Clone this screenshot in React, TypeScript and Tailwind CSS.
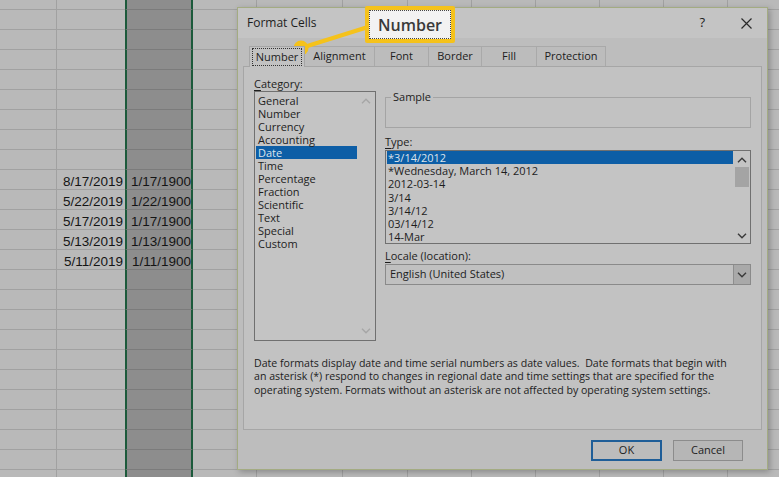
const COLS = [
  'w-[57px]',
  'w-[68px]',
  'w-[68px]',
  'w-[64px]',
  'w-[86px]',
  'w-[65px]',
  'w-[64px]',
  'w-[64px]',
  'w-[64px]',
  'w-[64px]',
  'w-[64px]',
  'w-[64px]',
];

const DATES: Record<number, [string, string]> = {
  9: ['8/17/2019', '1/17/1900'],
  10: ['5/22/2019', '1/22/1900'],
  11: ['5/17/2019', '1/17/1900'],
  12: ['5/13/2019', '1/13/1900'],
  13: ['5/11/2019', '1/11/1900'],
};

const CATEGORIES = [
  'General',
  'Number',
  'Currency',
  'Accounting',
  'Date',
  'Time',
  'Percentage',
  'Fraction',
  'Scientific',
  'Text',
  'Special',
  'Custom',
];

const TYPES = [
  '*3/14/2012',
  '*Wednesday, March 14, 2012',
  '2012-03-14',
  '3/14',
  '3/14/12',
  '03/14/12',
  '14-Mar',
];

const TABS = [
  { label: 'Number', w: 'w-[56px]' },
  { label: 'Alignment', w: 'w-[70px]' },
  { label: 'Font', w: 'w-[54px]' },
  { label: 'Border', w: 'w-[53px]' },
  { label: 'Fill', w: 'w-[55px]' },
  { label: 'Protection', w: 'w-[69px]' },
];

function Chevron({ up, className }: { up?: boolean; className?: string }) {
  return (
    <svg width="10" height="6" viewBox="0 0 10 6" className={className}>
      <path
        d={up ? 'M1 5.2 L5 1.2 L9 5.2' : 'M1 0.8 L5 4.8 L9 0.8'}
        fill="none"
        stroke="currentColor"
        strokeWidth="1.4"
      />
    </svg>
  );
}

function Sheet() {
  const rows = Array.from({ length: 25 }, (_, i) => i);
  return (
    <div className="flex flex-col">
      {rows.map((r) => (
        <div key={r} className={r === 0 ? 'flex h-[10px]' : 'flex h-[20px]'}>
          {COLS.map((w, c) => {
            const data = DATES[r];
            const text = data && (c === 1 ? data[0] : c === 2 ? data[1] : '');
            let cls = `${w} shrink-0 border-b border-[#a1a1a1] flex items-end justify-end pr-[2px] pb-[1px]`;
            if (c === 2) {
              cls = `${w} shrink-0 border-b border-b-[#7b7b7b] border-x-2 border-x-[#1c5a3b] bg-[#8d8d8d] flex items-end justify-end pr-0 pb-[1px]`;
            } else if (c !== 1) {
              cls += ' border-r';
            }
            return (
              <div key={c} className={cls}>
                {text ? (
                  <span className="font-['Liberation_Sans',sans-serif] text-[13.5px] text-[#151515] leading-none">
                    {text}
                  </span>
                ) : null}
              </div>
            );
          })}
        </div>
      ))}
    </div>
  );
}

function Dialog() {
  return (
    <div className="absolute left-[237px] top-[7px] w-[531px] h-[463px] border border-[#a3ab82] bg-[#bdbdbd] shadow-[2px_2px_6px_rgba(0,0,0,0.25)] flex flex-col font-['Open_Sans',sans-serif] text-[#1d1d1d]">
      {/* Title bar */}
      <div className="h-[30px] bg-[#c4c4c4] flex items-center pl-[9px] pr-[15px] shrink-0">
        <span className="text-[12px]">Format Cells</span>
        <span className="ml-auto text-[13px] mr-[36px]">?</span>
        <svg width="11" height="11" viewBox="0 0 11 11">
          <path d="M0.5 0.5 L10.5 10.5 M10.5 0.5 L0.5 10.5" stroke="#2a2a2a" strokeWidth="1.2" />
        </svg>
      </div>

      {/* Body */}
      <div className="flex-1 flex flex-col px-[5px] pt-[8px]">
        <div className="flex pl-[6px] h-[20px]">
          {TABS.map((t, i) => (
            <div
              key={t.label}
              className={
                i === 0
                  ? `${t.w} h-[21px] -mb-px relative z-10 bg-[#c2c2c2] border border-b-0 border-[#a6a6a6] flex items-center justify-center`
                  : `${t.w} h-[20px] border border-l-0 border-b-0 border-[#a9a9a9] bg-[#bcbcbc] flex items-center justify-center text-[11px]`
              }
            >
              {i === 0 ? (
                <span className="border border-dotted border-[#333] px-[3px] leading-[16px] text-[11px]">
                  {t.label}
                </span>
              ) : (
                t.label
              )}
            </div>
          ))}
        </div>

        {/* Tab panel */}
        <div className="h-[364px] border border-[#a6a6a6] bg-[#c2c2c2] pl-[10px] pt-[10px] text-[11px] flex flex-col">
          <div className="flex">
            {/* Category */}
            <div className="w-[122px] flex flex-col">
              <div className="h-[14px] leading-[14px]">
                <span className="underline underline-offset-2">C</span>ategory:
              </div>
              <div className="h-[250px] border border-[#707070] bg-[#c4c4c4] flex">
                <div className="flex-1 pt-[2px] pl-px">
                  {CATEGORIES.map((c) => (
                    <div
                      key={c}
                      className={
                        c === 'Date'
                          ? 'h-[13px] leading-[13px] pl-[2px] bg-[#0d5ea6] text-[#dce4ec]'
                          : 'h-[13px] leading-[13px] pl-[2px]'
                      }
                    >
                      {c}
                    </div>
                  ))}
                </div>
                <div className="w-[18px] flex flex-col items-center justify-between py-[6px] text-[#a6a6a6]">
                  <Chevron up />
                  <Chevron />
                </div>
              </div>
            </div>

            {/* Right column */}
            <div className="ml-[9px] w-[366px] flex flex-col">
              <fieldset className="mt-[13px] h-[38px] border border-[#a4a4a4] pl-[5px]">
                <legend className="px-[2px] leading-[14px]">Sample</legend>
              </fieldset>

              <div className="mt-[5px] h-[17px] leading-[17px]">
                <span className="underline underline-offset-2">T</span>ype:
              </div>
              <div className="h-[94px] border border-[#707070] bg-[#c4c4c4] flex">
                <div className="flex-1 pl-px">
                  {TYPES.map((t, i) => (
                    <div
                      key={t}
                      className={
                        i === 0
                          ? 'h-[13.2px] leading-[13.2px] pl-[1px] bg-[#0d5ea6] text-[#dce4ec]'
                          : 'h-[13.2px] leading-[13.2px] pl-[1px]'
                      }
                    >
                      {t}
                    </div>
                  ))}
                </div>
                <div className="w-[17px] flex flex-col items-center pt-[6px] pb-[4px] text-[#3a3a3a]">
                  <Chevron up />
                  <div className="mt-[4px] w-[14px] h-[20px] bg-[#a4a4a4]" />
                  <div className="flex-1" />
                  <Chevron />
                </div>
              </div>

              <div className="mt-[3px] h-[17px] leading-[17px]">
                <span className="underline underline-offset-2">L</span>ocale (location):
              </div>
              <div className="h-[21px] border border-[#8a8a8a] bg-[#c0c0c0] flex items-center">
                <span className="pl-[4px] flex-1">English (United States)</span>
                <div className="w-[17px] h-full bg-[#a9a9a9] border-l border-[#8e8e8e] flex items-center justify-center text-[#3a3a3a]">
                  <Chevron />
                </div>
              </div>
            </div>
          </div>

          <p className="mt-[16px] w-[484px] leading-[13.3px] text-[10.6px]">
            Date formats display date and time serial numbers as date values.&nbsp; Date formats that begin with an
            asterisk (*) respond to changes in regional date and time settings that are specified for the operating
            system. Formats without an asterisk are not affected by operating system settings.
          </p>
        </div>

        {/* Buttons */}
        <div className="flex justify-end gap-[11px] mt-[10px] pr-[19px]">
          <button className="w-[71px] h-[21px] border-2 border-[#1f5e98] bg-[#bcbcbc] text-[11px]">OK</button>
          <button className="w-[70px] h-[21px] border border-[#8c8c8c] bg-[#b6b6b6] text-[11px]">Cancel</button>
        </div>
      </div>
    </div>
  );
}

function Callout() {
  return (
    <>
      <svg className="absolute left-0 top-0 pointer-events-none" width="779" height="477">
        <line x1="368" y1="27" x2="301" y2="48" stroke="#f5c21b" strokeWidth="4" strokeLinecap="round" />
        <circle cx="301" cy="48" r="7.5" fill="#f5c21b" />
      </svg>
      <div className="absolute left-[365px] top-[6px] w-[90px] h-[37px] bg-[#f5c21b] p-[4px] rounded-[2px]">
        <div className="w-full h-full bg-[#f2f2f2] border border-dotted border-[#444] flex items-center justify-center">
          <span className="font-['Open_Sans',sans-serif] font-semibold text-[16px] text-[#3a3a3a] leading-none">
            Number
          </span>
        </div>
      </div>
    </>
  );
}

export default function App() {
  return (
    <div className="relative w-[779px] h-[477px] overflow-hidden bg-[#b9b9b9]">
      <Sheet />
      <Dialog />
      <Callout />
    </div>
  );
}
